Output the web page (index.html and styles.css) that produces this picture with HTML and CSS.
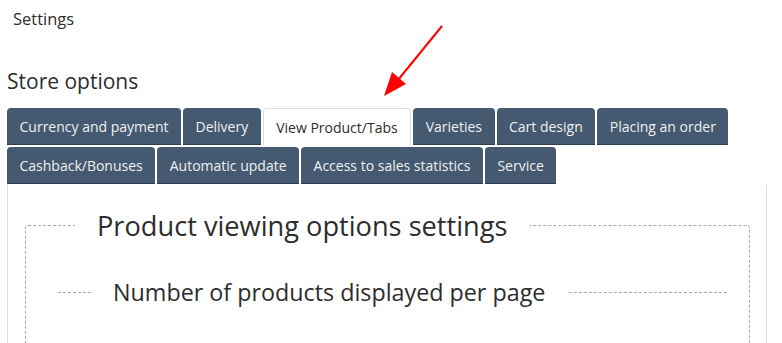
FILE: index.html
```html
<!DOCTYPE html>
<html lang="en">
<head>
    <meta charset="UTF-8">
    <meta name="viewport" content="width=device-width, initial-scale=1.0">
    <title>Settings</title>
    <link rel="stylesheet" href="styles.css">
</head>
<body>
    <div class="page-title">Settings</div>

    <h2 class="section-title">Store options</h2>

    <div class="tabs">
        <div class="tab-row">
            <span class="tab">Currency and payment</span>
            <span class="tab">Delivery</span>
            <span class="tab active">View Product/Tabs</span>
            <span class="tab">Varieties</span>
            <span class="tab">Cart design</span>
            <span class="tab">Placing an order</span>
        </div>
        <div class="tab-row">
            <span class="tab">Cashback/Bonuses</span>
            <span class="tab">Automatic update</span>
            <span class="tab">Access to sales statistics</span>
            <span class="tab">Service</span>
        </div>
    </div>

    <div class="panel">
        <fieldset class="group">
            <legend>Product viewing options settings</legend>
            <fieldset class="subgroup">
                <legend>Number of products displayed per page</legend>
            </fieldset>
        </fieldset>
    </div>

    <!-- pointer arrow from the screenshot -->
    <svg class="arrow" width="80" height="90" viewBox="0 0 80 90">
        <line x1="62" y1="6" x2="18" y2="60" stroke="#f00" stroke-width="2"/>
        <polygon points="4,76 12,52 26,64" fill="#f00"/>
    </svg>
</body>
</html>
```

FILE: styles.css
```css
body {
    font-family: "Open Sans", Arial, sans-serif;
    margin: 0;
    padding: 0 15px 0 7px;
    background-color: #fff;
    color: #2d2d2d;
    position: relative;
}
.page-title {
    font-size: 16.5px;
    line-height: 22px;
    padding: 8px 0 0 6px;
    height: 30px;
}
.section-title {
    font-size: 21px;
    font-weight: normal;
    margin: 30px 0 0;
    line-height: 26px;
}
.tabs {
    margin-top: 14px;
}
.tab-row {
    display: flex;
    gap: 2px;
    height: 37px;
    margin-bottom: 2px;
}
.tab {
    background-color: #455a71;
    color: #eef0f2;
    font-size: 14px;
    padding: 0 12.5px;
    display: flex;
    align-items: center;
    border-radius: 4px 4px 0 0;
    border-bottom: 1px solid #2e3d4d;
}
.tab.active {
    background-color: #fff;
    color: #2d2d2d;
    border: 1px solid #ddd;
    border-bottom: none;
}
.panel {
    border: 1px solid #ddd;
    border-top: none;
    border-radius: 0 4px 0 0;
    margin-top: -3px;
    padding: 24px 16px 0 17px;
    height: 200px;
}
.group {
    border: 1px dashed #aaa;
    border-radius: 3px;
    margin: 0;
    padding: 32px 22px 0 32px;
    height: 180px;
}
.group > legend {
    font-size: 27.2px;
    padding: 0 22px;
    margin-left: 17px;
}
.subgroup {
    border: none;
    border-top: 1px dashed #aaa;
    margin: 0;
    padding: 0;
}
.subgroup > legend {
    font-size: 23.3px;
    padding: 0 22px;
    margin-left: 33px;
}
.arrow {
    position: absolute;
    left: 380px;
    top: 20px;
}
```
